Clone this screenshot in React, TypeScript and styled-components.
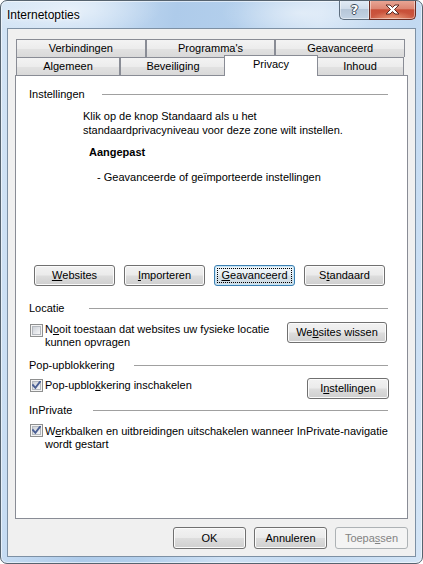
import React from 'react'
import styled, { createGlobalStyle, css } from 'styled-components'

const GlobalStyle = createGlobalStyle`
  html, body {
    margin: 0;
    padding: 0;
    background: #ffffff;
  }
  body {
    font-family: 'Liberation Sans', Arial, sans-serif;
    font-size: 11px;
    color: #000;
  }
`

export default function App() {
  return (
    <>
      <GlobalStyle />
      <Window>
        <TitleBar>
          <Title>Internetopties</Title>
          <Controls>
            <HelpButton>?</HelpButton>
            <CloseButton>
              <svg width="17" height="11" viewBox="0 0 17 11">
                <path
                  d="M2 1 H6 L8.5 3.5 L11 1 H15 L10.5 5.5 L15 10 H11 L8.5 7.5 L6 10 H2 L6.5 5.5 Z"
                  fill="#fff"
                  stroke="#5a2a22"
                  strokeWidth="1"
                  strokeLinejoin="round"
                />
              </svg>
            </CloseButton>
          </Controls>
        </TitleBar>

        <Client>
          <TabStrip>
            <TabRow>
              <Tab $grow>Verbindingen</Tab>
              <Tab $grow>Programma's</Tab>
              <Tab $grow>Geavanceerd</Tab>
            </TabRow>
            <TabRow>
              <Tab $width={104}>Algemeen</Tab>
              <Tab $width={106}>Beveiliging</Tab>
              <Tab $width={94} $active>
                Privacy
              </Tab>
              <Tab $width={88}>Inhoud</Tab>
            </TabRow>
          </TabStrip>

          <Panel>
            <SectionHeader $labelWidth={73}>
              <span>Instellingen</span>
              <Rule />
            </SectionHeader>

            <Intro>
              Klik op de knop Standaard als u het
              <br />
              standaardprivacyniveau voor deze zone wilt instellen.
            </Intro>
            <LevelName>Aangepast</LevelName>
            <LevelText>- Geavanceerde of geïmporteerde instellingen</LevelText>

            <ButtonRow>
              <Button $width={81}>
                <u>W</u>ebsites
              </Button>
              <Button $width={81}>
                <u>I</u>mporteren
              </Button>
              <Button $width={81} $focused>
                <u>G</u>eavanceerd
              </Button>
              <Button $width={81}>
                S<u>t</u>andaard
              </Button>
            </ButtonRow>

            <SectionHeader $labelWidth={60} $top={16}>
              <span>Locatie</span>
              <Rule />
            </SectionHeader>
            <OptionRow $top={7}>
              <CheckLabel>
                <CheckBox $top={2} />
                <span>
                  N<u>o</u>oit toestaan dat websites uw fysieke locatie
                  <br />
                  kunnen opvragen
                </span>
              </CheckLabel>
              <Button $width={100} $right={1}>
                We<u>b</u>sites wissen
              </Button>
            </OptionRow>

            <SectionHeader $labelWidth={105} $top={10}>
              <span>Pop-upblokkering</span>
              <Rule />
            </SectionHeader>
            <OptionRow $top={6}>
              <CheckLabel>
                <CheckBox $top={1} $checked />
                <span>
                  Pop-upblo<u>k</u>kering inschakelen
                </span>
              </CheckLabel>
              <Button $width={82} $right={-1}>
                I<u>n</u>stellingen
              </Button>
            </OptionRow>

            <SectionHeader $labelWidth={64} $top={5}>
              <span>InPrivate</span>
              <Rule />
            </SectionHeader>
            <OptionRow $top={7}>
              <CheckLabel>
                <CheckBox $top={0} $checked />
                <span>
                  W<u>e</u>rkbalken en uitbreidingen uitschakelen wanneer
                  InPrivate-navigatie
                  <br />
                  wordt gestart
                </span>
              </CheckLabel>
            </OptionRow>
          </Panel>

          <Footer>
            <Button $width={73} $height={22}>
              OK
            </Button>
            <Button $width={73} $height={22}>
              Annuleren
            </Button>
            <Button $width={73} $height={22} $disabled>
              Toepa<u>s</u>sen
            </Button>
          </Footer>
        </Client>
      </Window>
    </>
  )
}

function CheckBox({ $checked, $top }: { $checked?: boolean; $top: number }) {
  return (
    <CheckOuter $top={$top}>
      <CheckInner>
        {$checked && (
          <svg width="9" height="9" viewBox="0 0 9 9">
            <path
              d="M1 4.2 L3.4 6.8 L8 0.8"
              fill="none"
              stroke="#4a5f94"
              strokeWidth="1.9"
              strokeLinecap="square"
            />
          </svg>
        )}
      </CheckInner>
    </CheckOuter>
  )
}

const Window = styled.div`
  box-sizing: border-box;
  width: 423px;
  height: 564px;
  display: flex;
  flex-direction: column;
  border: 1px solid #56636f;
  border-radius: 7px;
  overflow: hidden;
  box-shadow: inset 0 0 0 1px rgba(255, 255, 255, 0.55);
  background:
    radial-gradient(ellipse 90px 30px at 70px 8px, rgba(255, 255, 255, 0.55), rgba(255, 255, 255, 0)),
    radial-gradient(ellipse 80px 26px at 300px 12px, rgba(255, 255, 255, 0.45), rgba(255, 255, 255, 0)),
    linear-gradient(
      100deg,
      #d3e4f5 0%,
      #c8ddf3 18%,
      #aecbea 34%,
      #b3cfec 46%,
      #cfe1f4 62%,
      #c2d9f1 80%,
      #d4e5f6 100%
    );
`

const TitleBar = styled.div`
  height: 27px;
  display: flex;
  align-items: flex-start;
  justify-content: space-between;
`

const Title = styled.div`
  padding: 7px 0 0 6px;
  font-family: 'Liberation Sans', Arial, sans-serif;
  font-size: 12px;
  line-height: 15px;
  color: #000;
  text-shadow: 0 0 6px rgba(255, 255, 255, 0.95), 0 0 3px rgba(255, 255, 255, 0.9);
`

const Controls = styled.div`
  display: flex;
  margin: -1px 6px 0 0;
`

const controlBase = css`
  box-sizing: border-box;
  height: 20px;
  display: flex;
  align-items: center;
  justify-content: center;
  border: 1px solid #5d6d7e;
  border-top: none;
  box-shadow: inset 0 0 0 1px rgba(255, 255, 255, 0.45);
`

const HelpButton = styled.div`
  ${controlBase};
  width: 30px;
  border-right: none;
  border-bottom-left-radius: 5px;
  background: linear-gradient(#e3ecf6 0%, #d0dcea 45%, #b6c6d8 50%, #c3d3e4 100%);
  font-family: 'DejaVu Sans', sans-serif;
  font-weight: bold;
  font-size: 13px;
  color: #fff;
  text-shadow: 1px 0 0 #3d4a5a, -1px 0 0 #3d4a5a, 0 1px 0 #3d4a5a, 0 -1px 0 #3d4a5a;
`

const CloseButton = styled.div`
  ${controlBase};
  width: 47px;
  border-bottom-right-radius: 5px;
  border-color: #6a2c22;
  background:
    radial-gradient(ellipse 22px 8px at 50% 100%, rgba(255, 200, 160, 0.6), rgba(255, 200, 160, 0)),
    linear-gradient(#e9a998 0%, #dc8673 45%, #c84f38 52%, #cc5a43 100%);
`

const Client = styled.div`
  flex: 1;
  margin: 0 6px 6px 6px;
  padding: 10px 7px 0 7px;
  display: flex;
  flex-direction: column;
  border: 1px solid #7d90a4;
  background: #f0f0f0;
`

const TabStrip = styled.div`
  padding: 0 3px 0 1px;
  display: flex;
  flex-direction: column;
`

const TabRow = styled.div`
  height: 18px;
  display: flex;
  align-items: flex-start;
`

const Tab = styled.div<{ $grow?: boolean; $width?: number; $active?: boolean }>`
  box-sizing: border-box;
  height: 18px;
  padding-top: 2px;
  flex: ${(p) => (p.$grow ? '1 1 0' : `0 0 ${p.$width}px`)};
  border: 1px solid #898c95;
  border-bottom: none;
  background: linear-gradient(#f3f3f3 0%, #ececec 50%, #e2e2e2 51%, #d9d9d9 100%);
  text-align: center;
  line-height: 13px;
  white-space: nowrap;

  & + & {
    border-left-color: #898c95;
  }

  ${(p) =>
    p.$active &&
    css`
      position: relative;
      z-index: 1;
      height: 21px;
      margin: -2px -2px 0 -2px;
      background: #ffffff;
    `}
`

const Panel = styled.div`
  box-sizing: border-box;
  height: 444px;
  padding: 12px 19px 0 13px;
  display: flex;
  flex-direction: column;
  border: 1px solid #898c95;
  background: #ffffff;
`

const SectionHeader = styled.div<{ $labelWidth: number; $top?: number }>`
  margin-top: ${(p) => p.$top ?? 0}px;
  height: 13px;
  display: flex;
  align-items: center;
  line-height: 13px;

  & > span {
    flex: 0 0 ${(p) => p.$labelWidth}px;
  }
`

const Rule = styled.div`
  flex: 1;
  height: 1px;
  margin-right: 0;
  background: #a0a0a0;
`

const Intro = styled.div`
  margin: 8px 0 0 54px;
  line-height: 14px;
`

const LevelName = styled.div`
  margin: 9px 0 0 60px;
  line-height: 13px;
  font-weight: bold;
`

const LevelText = styled.div`
  margin: 12px 0 0 68px;
  line-height: 13px;
`

const ButtonRow = styled.div`
  margin: 81px 0 0 5px;
  display: flex;
  gap: 9px;
`

const Button = styled.div<{
  $width: number
  $height?: number
  $focused?: boolean
  $disabled?: boolean
  $right?: number
}>`
  position: relative;
  box-sizing: border-box;
  width: ${(p) => p.$width}px;
  height: ${(p) => p.$height ?? 21}px;
  margin-right: ${(p) => p.$right ?? 0}px;
  display: flex;
  align-items: center;
  justify-content: center;
  flex-shrink: 0;
  border: 1px solid #707070;
  border-radius: 3px;
  box-shadow: inset 0 0 0 1px #fbfbfb;
  background: linear-gradient(#f2f2f2 0%, #ebebeb 48%, #dddddd 52%, #cfcfcf 100%);
  line-height: 13px;
  white-space: nowrap;

  u {
    text-underline-offset: 1px;
  }

  ${(p) =>
    p.$focused &&
    css`
      border-color: #3c7fb1;
      box-shadow: inset 0 0 0 1px #c6e6f8;
      background: linear-gradient(#f0f6fa 0%, #e8eff4 48%, #d8e3ea 52%, #cdd9e1 100%);

      &::after {
        content: '';
        position: absolute;
        inset: 2px;
        border: 1px dotted #000;
      }
    `}

  ${(p) =>
    p.$disabled &&
    css`
      border-color: #adb2b5;
      box-shadow: none;
      background: #f4f4f4;
      color: #838383;
    `}
`

const OptionRow = styled.div<{ $top: number }>`
  margin-top: ${(p) => p.$top}px;
  display: flex;
  align-items: flex-start;
  justify-content: space-between;
`

const CheckLabel = styled.div`
  display: flex;
  align-items: flex-start;
  line-height: 13px;
  padding-top: 1px;
`

const CheckOuter = styled.div<{ $top: number }>`
  box-sizing: border-box;
  width: 13px;
  height: 13px;
  margin: ${(p) => p.$top - 1}px 2px 0 1px;
  padding: 1px;
  flex-shrink: 0;
  border: 1px solid #8e8f8f;
  background: #f4f4f4;
`

const CheckInner = styled.div`
  box-sizing: border-box;
  width: 9px;
  height: 9px;
  display: flex;
  align-items: center;
  justify-content: center;
  border: 1px solid #b4b8be;
  background: linear-gradient(135deg, #cdd1d7 0%, #e4e6ea 55%, #f7f7f7 100%);

  svg {
    flex-shrink: 0;
    margin: -1px;
  }
`

const Footer = styled.div`
  margin-top: 8px;
  display: flex;
  justify-content: flex-end;
  gap: 8px;
`
